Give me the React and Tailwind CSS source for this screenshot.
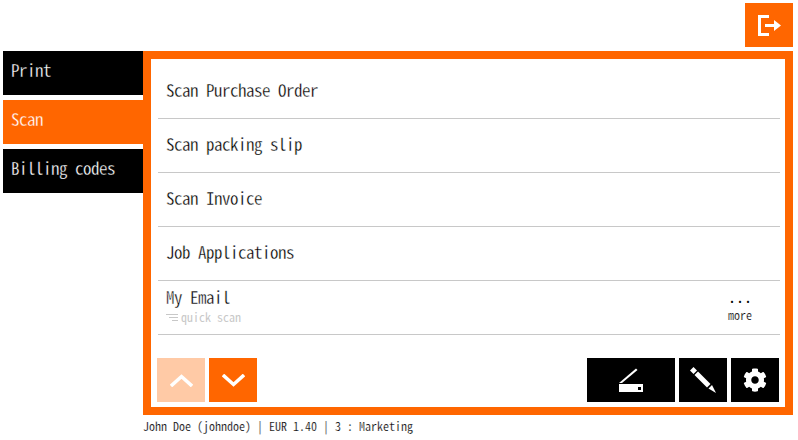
import React from 'react';
import { FaCog } from 'react-icons/fa';

const mono = { fontFamily: '"Noto Sans Mono CJK JP", "Noto Sans Mono CJK SC", "DejaVu Sans Mono", monospace' };

const tabs = [
  { label: 'Print' },
  { label: 'Scan', active: true },
  { label: 'Billing codes' },
];

const jobs = ['Scan Purchase Order', 'Scan packing slip', 'Scan Invoice', 'Job Applications'];

function LogoutIcon() {
  return (
    <svg width="23" height="21" viewBox="0 0 23 21" fill="#fff">
      <path d="M0 0h11v3H3v15h8v3H0z" />
      <path d="M7 9h9V5l7 5.500-7 5.500v-4H7z" />
    </svg>
  );
}

function ScannerIcon() {
  return (
    <svg width="24" height="24" viewBox="0 0 24 24" fill="#fff">
      <path d="M0 15 17 0.500 18.500 2 3 15z" />
      <path d="M0 16h24v8H0z" />
      <rect x="19" y="19" width="3" height="3" fill="#000" />
    </svg>
  );
}

function PencilIcon() {
  return (
    <svg width="26" height="26" viewBox="0 0 26 26" fill="#fff">
      <path d="M0 3.500 3.500 0 7 3.500 3.500 7z" />
      <path d="M4.500 8 8 4.500 20.500 17l-3.500 3.500z" />
      <path d="M18.500 21.500 22 18l4 8z" />
    </svg>
  );
}

function Chevron({ up }) {
  return (
    <svg width="23" height="13" viewBox="0 0 23 13" fill="none">
      <path d={up ? 'M1 12 11.500 2.500 22 12' : 'M1 1l10.500 9.500L22 1'} stroke="#fff" strokeWidth="3.500" />
    </svg>
  );
}

function App() {
  return (
    <div className="h-[440px] w-[798px] overflow-hidden bg-white text-black" style={mono}>
      <div className="flex justify-end pr-[5px] pt-[3px]">
        <button className="flex h-[44px] w-[48px] items-center justify-center bg-[#ff6600]">
          <LogoutIcon />
        </button>
      </div>

      <div className="mt-[4px] flex pl-[3px]">
        <div className="flex w-[140px] flex-col gap-[5px]">
          {tabs.map((t) => (
            <div
              key={t.label}
              className={`flex h-[44px] items-center pb-[6px] pl-[8px] text-[17px] tracking-[-0.5px] text-white ${t.active ? 'bg-[#ff6600] [-webkit-text-stroke:0.3px_#ff6600]' : 'bg-black [-webkit-text-stroke:0.3px_#000]'}`}>
              {t.label}
            </div>
          ))}
        </div>

        <div className="flex h-[364px] w-[650px] flex-col border-8 border-[#ff6600] pl-[7px] pr-[5px] pt-[6px]">
          {jobs.map((name) => (
            <div
              key={name}
              className="flex h-[54px] shrink-0 items-center border-b border-[#c8c8c8] pb-[4px] pl-[8px] text-[17px] tracking-[-0.5px] [-webkit-text-stroke:0.3px_#fff]">
              {name}
            </div>
          ))}
          <div className="flex h-[54px] shrink-0 items-center justify-between border-b border-[#c8c8c8] pb-[2px] pl-[8px] pr-[28px]">
            <div className="mb-[2px]">
              <div className="mb-[2px] text-[17px] leading-[20px] tracking-[-0.5px] opacity-[0.99] [-webkit-text-stroke:0.3px_#fff]">My Email</div>
              <div className="flex items-center gap-[3px] text-[12px] leading-[16px] text-[#c8c8c8]">
                <svg width="12" height="7" viewBox="0 0 12 7" fill="#c8c8c8" className="mt-[1px]">
                  <path d="M0 0h12v1H0zM3 3h9v1H3zM6 6h6v1H6z" />
                </svg>
                quick scan
              </div>
            </div>
            <div className="mb-[2px] flex flex-col items-center gap-[3px] text-[12px] leading-[16px]">
              <span className="text-[16px] leading-[16px]">...</span>
              <span className="opacity-[0.99] [-webkit-text-stroke:0.2px_#fff]">more</span>
            </div>
          </div>

          <div className="mt-[23px] flex justify-between pr-[1px]">
            <div className="-ml-px flex gap-[4px]">
              <button className="flex h-[44px] w-[48px] items-center justify-center bg-[#ffcaa6]">
                <Chevron up />
              </button>
              <button className="flex h-[44px] w-[48px] items-center justify-center bg-[#ff6600]">
                <Chevron />
              </button>
            </div>
            <div className="flex gap-[4px]">
              <button className="flex h-[44px] w-[88px] items-center justify-center bg-black">
                <ScannerIcon />
              </button>
              <button className="flex h-[44px] w-[48px] items-center justify-center bg-black">
                <PencilIcon />
              </button>
              <button className="flex h-[44px] w-[48px] items-center justify-center bg-black">
                <FaCog className="text-white" size={24} />
              </button>
            </div>
          </div>
        </div>
      </div>

      <div className="pl-[143px] pt-[3px] text-[12px] leading-[16px] [-webkit-text-stroke:0.2px_#fff]">John Doe (johndoe) | EUR 1.40 | 3 : Marketing</div>
    </div>
  );
}

export default App;
